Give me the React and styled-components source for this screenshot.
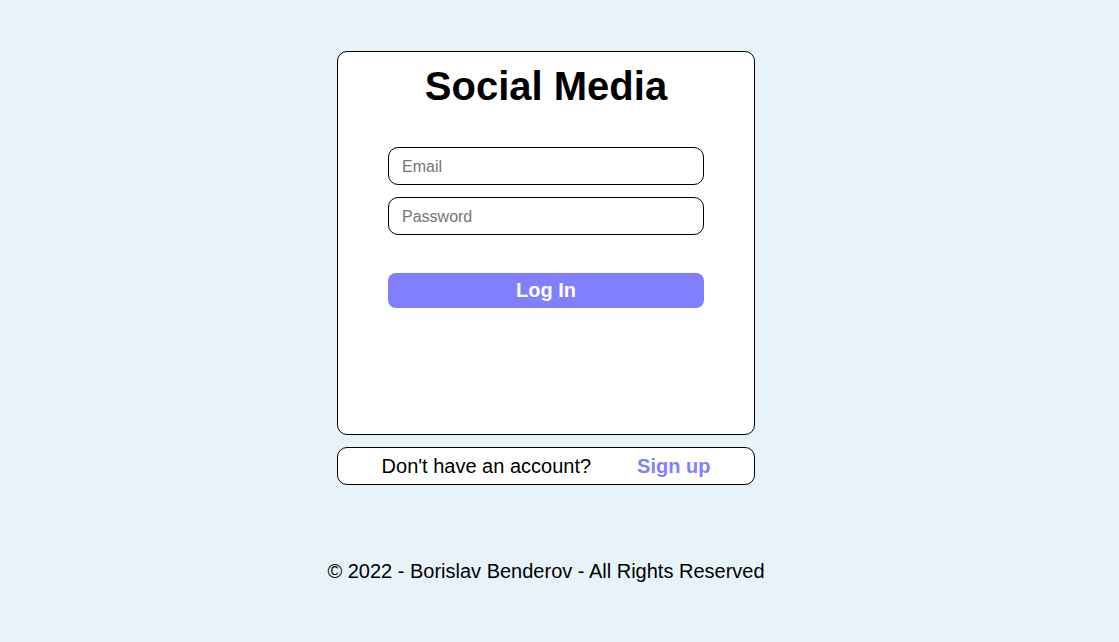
import styled, { createGlobalStyle } from "styled-components";

const GlobalStyle = createGlobalStyle`
  html, body {
    margin: 0;
    padding: 0;
    background: #e8f3f9;
    font-family: Arial, "Liberation Sans", sans-serif;
  }
`;

const Page = styled.div`
  min-height: 642px;
  display: flex;
  flex-direction: column;
  align-items: center;
  padding: 51px 27px 0 0;
  box-sizing: border-box;
`;

const Card = styled.div`
  width: 418px;
  height: 384px;
  box-sizing: border-box;
  background: #fff;
  border: 1px solid #000;
  border-radius: 10px;
  padding-top: 12px;
  display: flex;
  flex-direction: column;
  align-items: center;
`;

const Title = styled.h1`
  margin: 0 0 38px;
  font-size: 40px;
  font-weight: 700;
  line-height: normal;
  color: #000;
`;

const Form = styled.form`
  width: 316px;
  display: flex;
  flex-direction: column;
  gap: 12px;
`;

const Input = styled.input`
  width: 100%;
  height: 38px;
  box-sizing: border-box;
  border: 1px solid #000;
  border-radius: 10px;
  padding: 1px 13px 0;
  font-family: Arial, "Liberation Sans", sans-serif;
  font-size: 16px;
  outline: none;
  &::placeholder {
    color: #757575;
  }
`;

const Button = styled.button`
  margin-top: 26px;
  width: 100%;
  height: 35px;
  border: none;
  border-radius: 8px;
  background: #8080ff;
  color: #fff;
  font-family: Arial, "Liberation Sans", sans-serif;
  font-size: 20px;
  font-weight: 700;
  cursor: pointer;
`;

const SignBox = styled.div`
  margin-top: 12px;
  width: 418px;
  height: 38px;
  box-sizing: border-box;
  border: 1px solid #000;
  border-radius: 10px;
  background: #fff;
  display: flex;
  align-items: center;
  justify-content: center;
  gap: 46px;
  font-size: 20px;
`;

const SignLink = styled.a`
  color: #8080ff;
  font-weight: 700;
  text-decoration: none;
  cursor: pointer;
`;

const Footer = styled.footer`
  margin-top: 75px;
  font-size: 20px;
  color: #000;
`;

export default function App() {
  return (
    <>
      <GlobalStyle />
      <Page>
        <Card>
          <Title>Social Media</Title>
          <Form onSubmit={(e) => e.preventDefault()}>
            <Input type="email" placeholder="Email" />
            <Input type="password" placeholder="Password" />
            <Button type="submit">Log In</Button>
          </Form>
        </Card>
        <SignBox>
          <span>Don't have an account?</span>
          <SignLink>Sign up</SignLink>
        </SignBox>
        <Footer>© 2022 - Borislav Benderov - All Rights Reserved</Footer>
      </Page>
    </>
  );
}
